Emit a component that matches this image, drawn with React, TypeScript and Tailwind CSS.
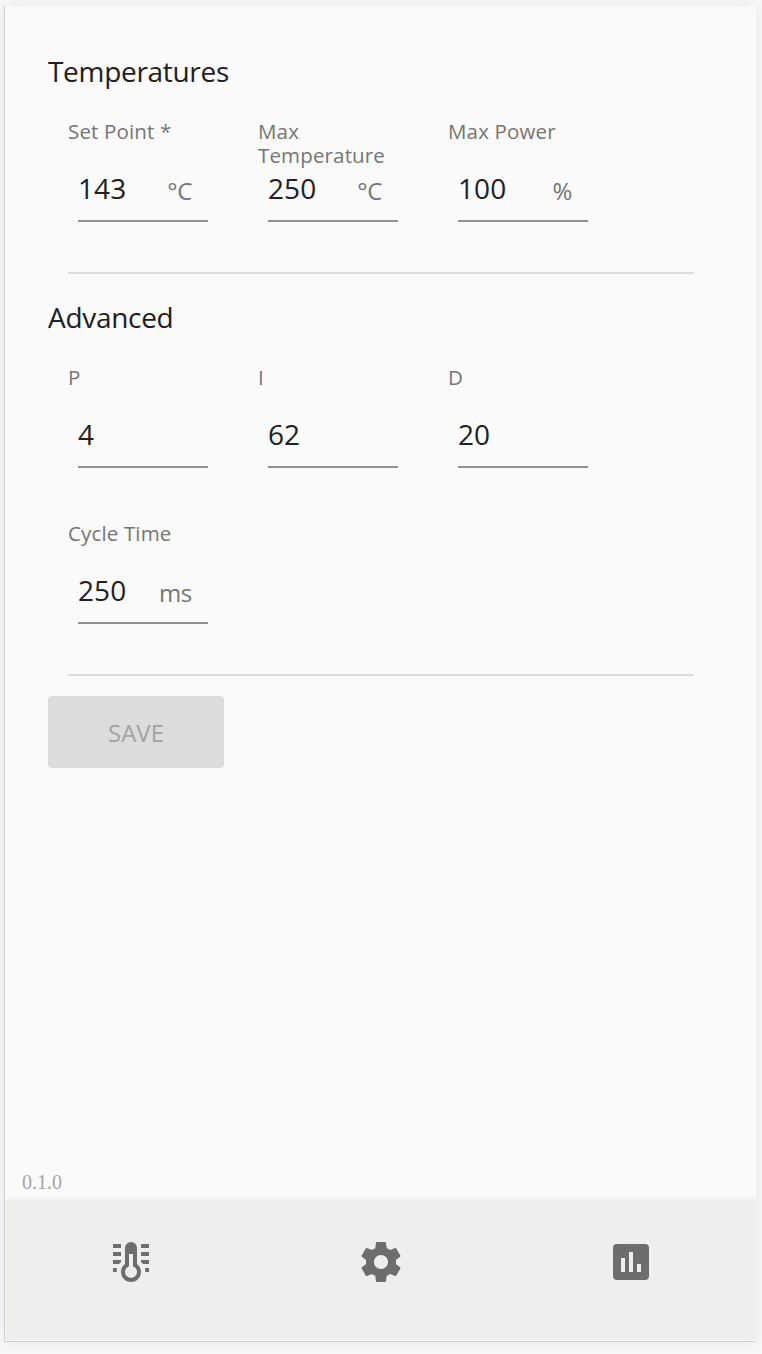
import type { ReactNode } from 'react';

type FieldProps = { label: string; value: string; unit?: string };

function Field({ label, value, unit }: FieldProps) {
  return (
    <label className="block h-[152px] w-[190px]">
      <span className="-mt-px block h-[53px] w-[140px] text-[20.5px] leading-[24px] tracking-[0.15px] text-[#757575]">{label}</span>
      <span className="ml-[10px] flex h-[50px] w-[130px] items-start justify-between border-b-2 border-[#919191] pr-4">
        <span className="text-[28px] leading-[32px] tracking-[0.1px] text-[#202020]">{value}</span>
        <span className="pt-[2px] text-[24px] leading-[34px] tracking-[-0.3px] text-[#757575]">{unit}</span>
      </span>
    </label>
  );
}

function Section({ title, children }: { title: string; children: ReactNode }) {
  return (
    <section>
      <h2 className="h-[68px] text-[28px] leading-[38px] tracking-[-0.3px] text-[#202020]">{title}</h2>
      <div className="ml-5 flex w-[626px] flex-wrap gap-y-1 border-b-2 border-[#dcdcdc]">{children}</div>
    </section>
  );
}

function NavIcon({ children }: { children: ReactNode }) {
  return (
    <button className="flex flex-1 justify-center pt-[38px]">
      <svg viewBox="0 0 24 24" className="size-12 fill-[#6d6d6c]">{children}</svg>
    </button>
  );
}

export default function App() {
  return (
    <div className="h-[1354px] w-[762px] bg-[#f8f8f8] pl-1 pt-[6px] font-['Open_Sans',sans-serif]">
      <div className="flex h-[1336px] w-[752px] flex-col overflow-hidden border-b border-l border-[#d0d0d2] bg-[#fafafa] pb-px pl-px shadow-[0_0_16px_rgba(0,0,0,0.07)]">
        <main className="flex-1 pl-[42px] pt-[46px]">
          <Section title="Temperatures">
            <Field label="Set Point *" value="143" unit="°C" />
            <Field label="Max Temperature" value="250" unit="°C" />
            <Field label="Max Power" value="100" unit="%" />
          </Section>
          <div className="pt-6">
            <Section title="Advanced">
              <Field label="P" value="4" />
              <Field label="I" value="62" />
              <Field label="D" value="20" />
              <Field label="Cycle Time" value="250" unit="ms" />
            </Section>
          </div>
          <button disabled className="mt-5 flex h-[72px] w-[176px] items-center justify-center rounded bg-[#dcdcdc] pt-[2px] text-[24px] text-[#a3a3a3]">SAVE</button>
        </main>
        <div className="h-[30px] pl-4 font-['Liberation_Serif',serif] text-[20px] leading-[24px] text-[#a6a6a6]">0.1.0</div>
        <nav className="flex h-[140px] bg-[#eeeeec] shadow-[0_-1px_3px_rgba(0,0,0,0.06)]">
          <NavIcon>
            <path fillRule="evenodd" d="M9 5a3 3 0 0 1 6 0v8a5 5 0 1 1-6 0zM11 8v6.17a3 3 0 1 0 2 0V8z" />
            <path d="M3 3h4v2H3zM3 7h4v2H3zM3 11h4v1q-.6.4-1 1H3zM3 15h2l-.2 2H3zM17 3h4v2h-4zM17 7h4v2h-4zM17 11h4v2h-3q-.4-.6-1-1zM19 15h2v2h-1.8z" />
          </NavIcon>
          <NavIcon>
            <path d="M19.43 12.98c.04-.32.07-.64.07-.98s-.03-.66-.07-.98l2.11-1.65c.19-.15.24-.42.12-.64l-2-3.46c-.12-.22-.39-.3-.61-.22l-2.49 1c-.52-.4-1.08-.73-1.69-.98l-.38-2.65C14.46 2.18 14.25 2 14 2h-4c-.25 0-.46.18-.49.42l-.38 2.65c-.61.25-1.17.59-1.69.98l-2.49-1c-.23-.09-.49 0-.61.22l-2 3.46c-.13.22-.07.49.12.64l2.11 1.65c-.04.32-.07.65-.07.98s.03.66.07.98l-2.11 1.65c-.19.15-.24.42-.12.64l2 3.46c.12.22.39.3.61.22l2.49-1c.52.4 1.08.73 1.69.98l.38 2.65c.03.24.24.42.49.42h4c.25 0 .46-.18.49-.42l.38-2.65c.61-.25 1.17-.59 1.69-.98l2.49 1c.23.09.49 0 .61-.22l2-3.46c.12-.22.07-.49-.12-.64l-2.11-1.65zM12 15.5c-1.93 0-3.5-1.57-3.5-3.5s1.57-3.5 3.5-3.5 3.5 1.57 3.5 3.5-1.57 3.5-3.5 3.5z" />
          </NavIcon>
          <NavIcon>
            <path d="M19 3H5a2 2 0 0 0-2 2v14a2 2 0 0 0 2 2h14a2 2 0 0 0 2-2V5a2 2 0 0 0-2-2zM9 17H7v-7h2zm4 0h-2V7h2zm4 0h-2v-4h2z" />
          </NavIcon>
        </nav>
      </div>
    </div>
  );
}
